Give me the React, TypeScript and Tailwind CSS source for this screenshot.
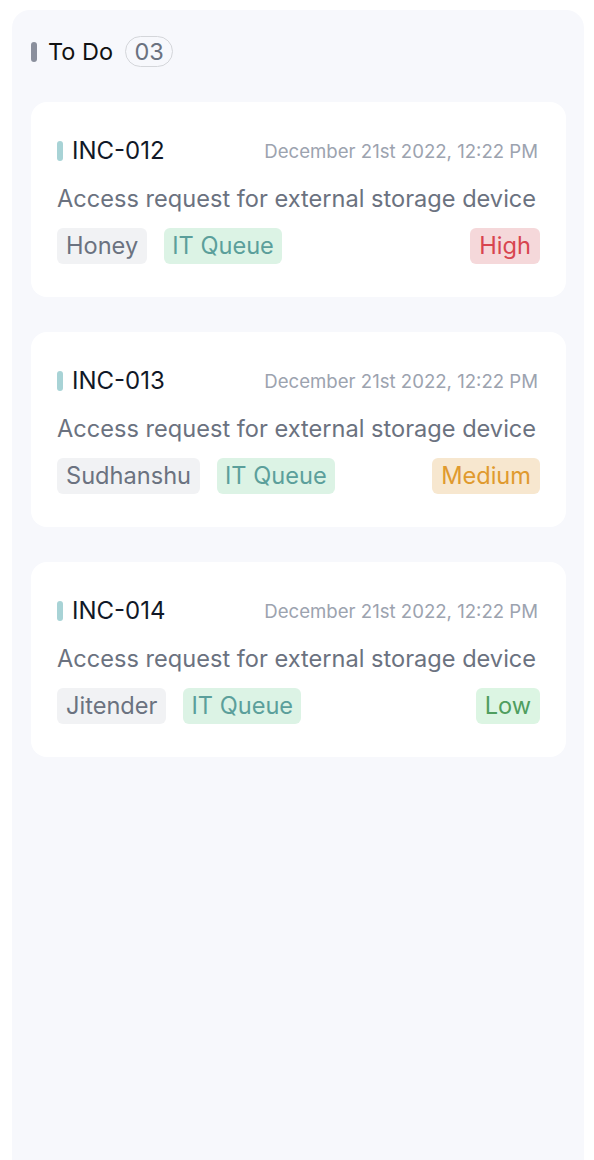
import React from "react";

type Ticket = {
  id: string;
  date: string;
  title: string;
  owner: string;
  queue: string;
  priority: "High" | "Medium" | "Low";
};

const tickets: Ticket[] = [
  {
    id: "INC-012",
    date: "December 21st 2022, 12:22 PM",
    title: "Access request for external storage device",
    owner: "Honey",
    queue: "IT Queue",
    priority: "High",
  },
  {
    id: "INC-013",
    date: "December 21st 2022, 12:22 PM",
    title: "Access request for external storage device",
    owner: "Sudhanshu",
    queue: "IT Queue",
    priority: "Medium",
  },
  {
    id: "INC-014",
    date: "December 21st 2022, 12:22 PM",
    title: "Access request for external storage device",
    owner: "Jitender",
    queue: "IT Queue",
    priority: "Low",
  },
];

const priorityStyles: Record<Ticket["priority"], string> = {
  High: "bg-[#f5d8da] text-[#d8454f]",
  Medium: "bg-[#f7e7cf] text-[#e09a2e]",
  Low: "bg-[#dcf5e3] text-[#4f9e5f]",
};

const TicketCard = ({ ticket }: { ticket: Ticket }) => {
  return (
    <div className="bg-white rounded-2xl pt-[35px] pb-[33px] px-[26px]">
      {/* header */}
      <div className="flex items-center justify-between h-[28px]">
        <div className="flex items-center gap-[9px]">
          <span className="w-[6px] h-[20px] rounded-full bg-[#a8d3d6]" />
          <span className="text-[24px] text-[#111827] leading-none">
            {ticket.id}
          </span>
        </div>
        <span className="mr-[2px] text-[18.6px] text-[#9ca3af] leading-none">
          {ticket.date}
        </span>
      </div>

      <p className="mt-[19px] text-[23.6px] leading-[30px] text-[#6b7280] whitespace-nowrap">
        {ticket.title}
      </p>

      {/* tags */}
      <div className="mt-[14px] flex items-center">
        <span className="h-[36px] flex items-center px-[9px] rounded-md bg-[#f1f2f4] text-[23.6px] text-[#6b7280]">
          {ticket.owner}
        </span>
        <span className="ml-[17px] h-[36px] flex items-center px-[8px] rounded-md bg-[#dcf3e5] text-[23.6px] text-[#5b9f9b]">
          {ticket.queue}
        </span>
        <span
          className={`ml-auto h-[36px] flex items-center px-[9px] rounded-md text-[23.6px] ${priorityStyles[ticket.priority]}`}
        >
          {ticket.priority}
        </span>
      </div>
    </div>
  );
};

const App = () => {
  return (
    <div
      className="min-h-screen bg-white pt-[10px] pl-[12px] pr-[10px]"
      style={{ fontFamily: "Inter, 'Noto Sans', sans-serif" }}
    >
      <div className="min-h-[1150px] bg-[#f7f8fc] rounded-t-[18px] pl-[19px] pr-[18px] pt-[26px]">
        <div className="flex items-center h-[31px]">
          <span className="w-[6px] h-[20px] rounded-full bg-[#8a8f9c]" />
          <span className="ml-[11px] text-[23.5px] text-[#111111] leading-none">
            To Do
          </span>
          <span className="ml-[12px] h-[31px] w-[48px] flex items-center justify-center rounded-full border border-[#d4d6da] text-[23.5px] text-[#6b7280] leading-none">
            03
          </span>
        </div>

        <div className="mt-[35px] flex flex-col gap-[35px]">
          {tickets.map((t) => (
            <TicketCard key={t.id} ticket={t} />
          ))}
        </div>
      </div>
    </div>
  );
};

export default App;
